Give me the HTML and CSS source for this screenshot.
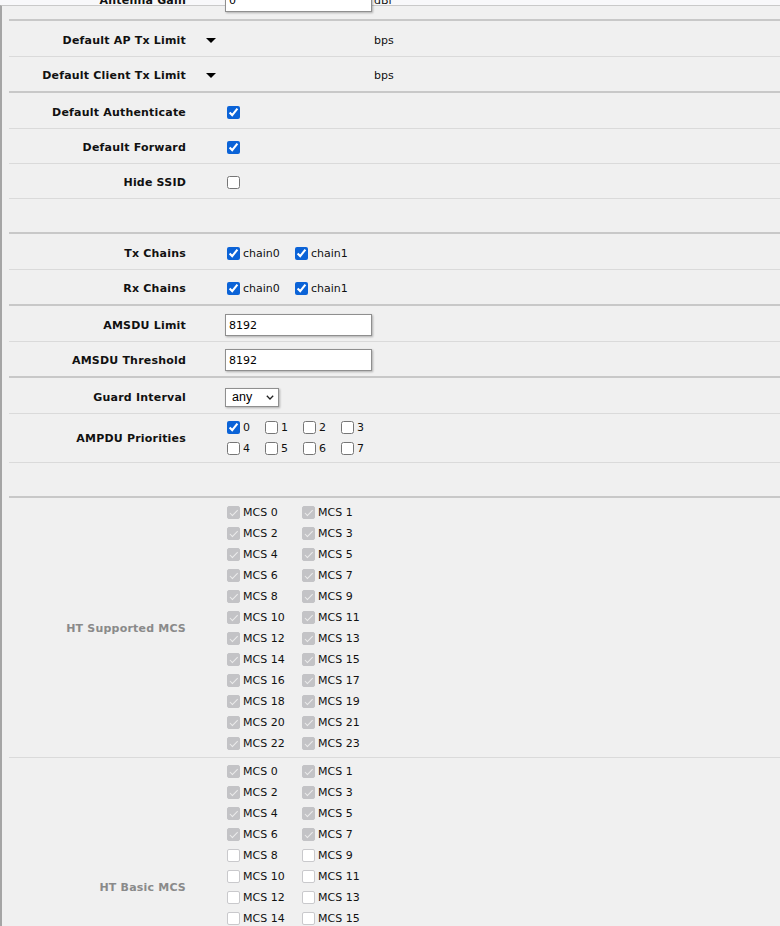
FILE: index.html
```html
<!DOCTYPE html>
<html>
<head>
<meta charset="utf-8">
<title>Wireless</title>
<link rel="stylesheet" href="styles.css">
</head>
<body>
<div class="frame">
  <div class="group">
    <div class="row first">
      <div class="label">Antenna Gain</div>
      <div class="arrow"></div>
      <div class="ctl"><input class="field" type="text" value="0"><span class="unit">dBi</span></div>
    </div>
  </div>

  <div class="group">
    <div class="row">
      <div class="label">Default AP Tx Limit</div>
      <div class="arrow"><span class="tri"></span></div>
      <div class="ctl"><span class="blank"></span><span class="unit">bps</span></div>
    </div>
    <div class="row">
      <div class="label">Default Client Tx Limit</div>
      <div class="arrow"><span class="tri"></span></div>
      <div class="ctl"><span class="blank"></span><span class="unit">bps</span></div>
    </div>
  </div>

  <div class="group">
    <div class="row">
      <div class="label">Default Authenticate</div>
      <div class="arrow"></div>
      <div class="ctl"><input class="cb" type="checkbox" checked></div>
    </div>
    <div class="row">
      <div class="label">Default Forward</div>
      <div class="arrow"></div>
      <div class="ctl"><input class="cb" type="checkbox" checked></div>
    </div>
    <div class="row">
      <div class="label">Hide SSID</div>
      <div class="arrow"></div>
      <div class="ctl"><input class="cb" type="checkbox"></div>
    </div>
    <div class="row empty"></div>
  </div>

  <div class="group">
    <div class="row">
      <div class="label">Tx Chains</div>
      <div class="arrow"></div>
      <div class="ctl chains">
        <label class="opt"><input class="cb" type="checkbox" checked>chain0</label>
        <label class="opt"><input class="cb" type="checkbox" checked>chain1</label>
      </div>
    </div>
    <div class="row">
      <div class="label">Rx Chains</div>
      <div class="arrow"></div>
      <div class="ctl chains">
        <label class="opt"><input class="cb" type="checkbox" checked>chain0</label>
        <label class="opt"><input class="cb" type="checkbox" checked>chain1</label>
      </div>
    </div>
  </div>

  <div class="group">
    <div class="row">
      <div class="label">AMSDU Limit</div>
      <div class="arrow"></div>
      <div class="ctl"><input class="field" type="text" value="8192"></div>
    </div>
    <div class="row">
      <div class="label">AMSDU Threshold</div>
      <div class="arrow"></div>
      <div class="ctl"><input class="field" type="text" value="8192"></div>
    </div>
  </div>

  <div class="group">
    <div class="row">
      <div class="label">Guard Interval</div>
      <div class="arrow"></div>
      <div class="ctl">
        <span class="pick">
          <select><option>any</option><option>long</option></select>
          <svg width="8" height="5" viewBox="0 0 8 5"><path d="M0.8 0.8 L4 4 L7.2 0.8" fill="none" stroke="#222" stroke-width="1.3"/></svg>
        </span>
      </div>
    </div>
    <div class="row list">
      <div class="label">AMPDU Priorities</div>
      <div class="arrow"></div>
      <div class="ctl opts prio">
        <label class="opt"><input class="cb" type="checkbox" checked>0</label>
        <label class="opt"><input class="cb" type="checkbox">1</label>
        <label class="opt"><input class="cb" type="checkbox">2</label>
        <label class="opt"><input class="cb" type="checkbox">3</label>
        <label class="opt"><input class="cb" type="checkbox">4</label>
        <label class="opt"><input class="cb" type="checkbox">5</label>
        <label class="opt"><input class="cb" type="checkbox">6</label>
        <label class="opt"><input class="cb" type="checkbox">7</label>
      </div>
    </div>
    <div class="row empty"></div>
  </div>

  <div class="group">
    <div class="row list">
      <div class="label dim">HT Supported MCS</div>
      <div class="arrow"></div>
      <div class="ctl opts mcs">
        <label class="opt"><input class="cb" type="checkbox" checked disabled>MCS 0</label>
        <label class="opt"><input class="cb" type="checkbox" checked disabled>MCS 1</label>
        <label class="opt"><input class="cb" type="checkbox" checked disabled>MCS 2</label>
        <label class="opt"><input class="cb" type="checkbox" checked disabled>MCS 3</label>
        <label class="opt"><input class="cb" type="checkbox" checked disabled>MCS 4</label>
        <label class="opt"><input class="cb" type="checkbox" checked disabled>MCS 5</label>
        <label class="opt"><input class="cb" type="checkbox" checked disabled>MCS 6</label>
        <label class="opt"><input class="cb" type="checkbox" checked disabled>MCS 7</label>
        <label class="opt"><input class="cb" type="checkbox" checked disabled>MCS 8</label>
        <label class="opt"><input class="cb" type="checkbox" checked disabled>MCS 9</label>
        <label class="opt"><input class="cb" type="checkbox" checked disabled>MCS 10</label>
        <label class="opt"><input class="cb" type="checkbox" checked disabled>MCS 11</label>
        <label class="opt"><input class="cb" type="checkbox" checked disabled>MCS 12</label>
        <label class="opt"><input class="cb" type="checkbox" checked disabled>MCS 13</label>
        <label class="opt"><input class="cb" type="checkbox" checked disabled>MCS 14</label>
        <label class="opt"><input class="cb" type="checkbox" checked disabled>MCS 15</label>
        <label class="opt"><input class="cb" type="checkbox" checked disabled>MCS 16</label>
        <label class="opt"><input class="cb" type="checkbox" checked disabled>MCS 17</label>
        <label class="opt"><input class="cb" type="checkbox" checked disabled>MCS 18</label>
        <label class="opt"><input class="cb" type="checkbox" checked disabled>MCS 19</label>
        <label class="opt"><input class="cb" type="checkbox" checked disabled>MCS 20</label>
        <label class="opt"><input class="cb" type="checkbox" checked disabled>MCS 21</label>
        <label class="opt"><input class="cb" type="checkbox" checked disabled>MCS 22</label>
        <label class="opt"><input class="cb" type="checkbox" checked disabled>MCS 23</label>
      </div>
    </div>
    <div class="row list">
      <div class="label dim">HT Basic MCS</div>
      <div class="arrow"></div>
      <div class="ctl opts mcs">
        <label class="opt"><input class="cb" type="checkbox" checked disabled>MCS 0</label>
        <label class="opt"><input class="cb" type="checkbox" checked disabled>MCS 1</label>
        <label class="opt"><input class="cb" type="checkbox" checked disabled>MCS 2</label>
        <label class="opt"><input class="cb" type="checkbox" checked disabled>MCS 3</label>
        <label class="opt"><input class="cb" type="checkbox" checked disabled>MCS 4</label>
        <label class="opt"><input class="cb" type="checkbox" checked disabled>MCS 5</label>
        <label class="opt"><input class="cb" type="checkbox" checked disabled>MCS 6</label>
        <label class="opt"><input class="cb" type="checkbox" checked disabled>MCS 7</label>
        <label class="opt"><input class="cb" type="checkbox" disabled>MCS 8</label>
        <label class="opt"><input class="cb" type="checkbox" disabled>MCS 9</label>
        <label class="opt"><input class="cb" type="checkbox" disabled>MCS 10</label>
        <label class="opt"><input class="cb" type="checkbox" disabled>MCS 11</label>
        <label class="opt"><input class="cb" type="checkbox" disabled>MCS 12</label>
        <label class="opt"><input class="cb" type="checkbox" disabled>MCS 13</label>
        <label class="opt"><input class="cb" type="checkbox" disabled>MCS 14</label>
        <label class="opt"><input class="cb" type="checkbox" disabled>MCS 15</label>
        <label class="opt"><input class="cb" type="checkbox" disabled>MCS 16</label>
        <label class="opt"><input class="cb" type="checkbox" disabled>MCS 17</label>
        <label class="opt"><input class="cb" type="checkbox" disabled>MCS 18</label>
        <label class="opt"><input class="cb" type="checkbox" disabled>MCS 19</label>
        <label class="opt"><input class="cb" type="checkbox" disabled>MCS 20</label>
        <label class="opt"><input class="cb" type="checkbox" disabled>MCS 21</label>
        <label class="opt"><input class="cb" type="checkbox" disabled>MCS 22</label>
        <label class="opt"><input class="cb" type="checkbox" disabled>MCS 23</label>
      </div>
    </div>
  </div>
</div>
</body>
</html>
```
FILE: styles.css
```css
* { box-sizing: border-box; }

html, body {
  margin: 0;
  padding: 0;
}

body {
  background: #f8f8fa;
  font-family: "DejaVu Sans", Verdana, sans-serif;
  font-size: 11px;
  color: #111;
  overflow: hidden;
}

.frame {
  margin-top: 5px;
  border-top: 1px solid #c9c9c9;
  border-left: 2px solid #a5a5a5;
  background: #f0f0f0;
  padding-left: 7px;
  min-height: 1400px;
}

.group {
  border-bottom: 2px solid #c8c8c8;
  margin-bottom: 1px;
}

.row {
  display: grid;
  grid-template-columns: 177px 39px 1fr;
  align-items: center;
  min-height: 34px;
  padding-top: 2px;
}

.row + .row {
  border-top: 1px solid #dadada;
  min-height: 35px;
}

.row.first {
  margin-top: -24px;
  min-height: 37px;
  padding-top: 0;
}

.row.empty {
  min-height: 34px;
  padding-top: 0;
}

.row.list {
  padding: 3px 0;
}

.label {
  text-align: right;
  font-weight: bold;
  letter-spacing: 0.2px;
  white-space: nowrap;
}

.label.dim {
  color: #8a8a8a;
}

.arrow {
  display: flex;
  align-items: center;
}

.tri {
  display: block;
  width: 0;
  height: 0;
  margin-left: 20px;
  border-left: 5px solid transparent;
  border-right: 5px solid transparent;
  border-top: 5px solid #000;
}

.ctl {
  display: flex;
  align-items: center;
}

.field {
  width: 147px;
  height: 22px;
  margin: 0;
  padding: 0 3px;
  border: 1px solid #8f8f8f;
  border-radius: 0;
  background: #fff;
  box-shadow: 1px 1px 2px rgba(0, 0, 0, 0.28);
  font-family: "DejaVu Sans", Verdana, sans-serif;
  font-size: 11px;
  color: #000;
}

.blank {
  display: block;
  width: 147px;
}

.unit {
  margin-left: 2px;
}

.pick {
  position: relative;
  display: inline-block;
  height: 19px;
}

.pick select {
  appearance: none;
  -webkit-appearance: none;
  width: 54px;
  height: 19px;
  margin: 0;
  padding: 0 0 0 6px;
  border: 1px solid #8f8f8f;
  border-radius: 0;
  background: #fff;
  box-shadow: 1px 1px 2px rgba(0, 0, 0, 0.28);
  font-family: "Liberation Sans", Arial, sans-serif;
  font-size: 12.5px;
  color: #000;
  outline: none;
}

.pick svg {
  position: absolute;
  left: 41px;
  top: 7px;
  pointer-events: none;
}

.cb {
  width: 13px;
  height: 13px;
  margin: 0 3px 0 2px;
  accent-color: #0b63d7;
  flex: none;
}

.cb:disabled {
  appearance: none;
  -webkit-appearance: none;
  position: relative;
  border: 1px solid #c9c9cc;
  border-radius: 2px;
  background: #fff;
}

.cb:disabled:checked {
  border-color: #c3c3c6;
  background: #c3c3c6;
}

.cb:disabled:checked::after {
  content: "";
  position: absolute;
  left: 3.5px;
  top: 1px;
  width: 3px;
  height: 6.5px;
  border-right: 1.6px solid #ececec;
  border-bottom: 1.6px solid #ececec;
  transform: rotate(45deg);
}

.opt {
  display: flex;
  align-items: center;
  white-space: nowrap;
}

.chains .opt {
  width: 68px;
}

.opts {
  display: grid;
  grid-auto-rows: 21px;
  align-items: center;
}

.mcs {
  grid-template-columns: repeat(2, 75px);
}

.prio {
  grid-template-columns: repeat(4, 38px);
}
```
